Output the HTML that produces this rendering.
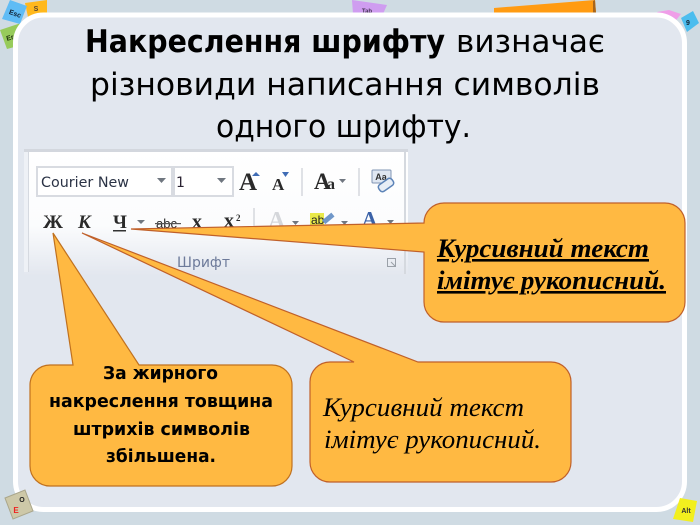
<!DOCTYPE html>
<html><head><meta charset="utf-8"><style>
html,body{margin:0;padding:0}
body{width:700px;height:525px;position:relative;overflow:hidden;background:#cfdbe3}
svg{position:absolute;left:0;top:0}
</style></head><body>
<svg width="700" height="525" viewBox="0 0 700 525" xmlns="http://www.w3.org/2000/svg">
<defs><linearGradient id="rb" x1="0" y1="0" x2="0" y2="1"><stop offset="0" stop-color="#fff"/><stop offset=".6" stop-color="#fbfcfd"/><stop offset="1" stop-color="#e3e7ef"/></linearGradient>
<filter id="b" x="0" y="0" width="100%" height="100%"><feGaussianBlur stdDeviation="0.35"/></filter></defs>
<g font-family="Liberation Sans, sans-serif" font-weight="bold" text-anchor="middle">
<path d="M25 3 L47 0 L47 13 L28 17Z" fill="#ffb81c"/>
<text x="36" y="11" font-size="7" fill="#543">S</text>
<path d="M0 30 L21 23 L30 30 L18 46 L7 49Z" fill="#97cb5b"/>
<text x="10" y="40" font-size="7" fill="#231" transform="rotate(-15 10 38)">Er</text>
<path d="M10 0 L27 6 L20 24 L2 19Z" fill="#5fbcf5"/>
<text x="15" y="16" font-size="7" fill="#123" transform="rotate(20 15 14)">Esc</text>
<path d="M352 0 L387 5 L383 14 L353 14Z" fill="#cf9df0"/>
<text x="367" y="13" font-size="6" fill="#435">Tab</text>
<path d="M494 8 L595 0 L596 13 L494 13Z" fill="#ff9b12"/>
<path d="M593 1 L595 0 L596 13 L593 13Z" fill="#a8651a"/>
<path d="M657 12 L669 10 L681 14 L673 24Z" fill="#ef9ee8"/>
<path d="M681 18 L693 11 L699 23 L687 32Z" fill="#4cbdee"/>
<text x="688" y="25" font-size="7" fill="#123">9</text>
</g>
<rect x="15.500" y="15" width="669" height="494.500" rx="28" fill="#e2e7ef" stroke="#fff" stroke-width="5"/>
<g font-family="Liberation Sans, sans-serif" font-weight="bold" text-anchor="middle">
<path d="M5 498 L25 490 L33 511 L13 519Z" fill="#cdc8a8" stroke="#aaa68b" stroke-width="1"/>
<text x="22" y="502" font-size="7" fill="#222">O</text>
<text x="16" y="513" font-size="8" fill="#e22">E</text>
<path d="M680 498 L697 501 L693 522 L673 519Z" fill="#f2ef1e"/>
<text x="686" y="513" font-size="7" fill="#333">Alt</text>
</g>
<g filter="url(#b)">
<rect x="24" y="150" width="384" height="125" fill="url(#rb)"/>
<rect x="24" y="149" width="384" height="3" fill="#d3d7de"/>
<rect x="24" y="152" width="4" height="120" fill="#eef1f6"/>
<rect x="28" y="152" width="1" height="120" fill="#d5d9e0"/>
<rect x="404" y="152" width="2" height="122" fill="#d5d9df"/>
<rect x="37" y="167" width="135" height="29" fill="#fff" stroke="#d8dbe1" stroke-width="2"/>
<rect x="174" y="167" width="59" height="29" fill="#fff" stroke="#d8dbe1" stroke-width="2"/>
<path d="M157 178h9l-4.500 5zM217 178h9l-4.500 5zM339 179h7l-3.500 4zM137 220h8l-4 4zM292 221h7l-3.500 4zM341 221h7l-3.500 4zM387 220h7l-3.500 4z" fill="#707780"/>
<text x="41" y="187" font-family="DejaVu Sans, sans-serif" font-size="14" fill="#2a3344" textLength="88" lengthAdjust="spacingAndGlyphs">Courier New</text>
<text x="176" y="187" font-family="DejaVu Sans, sans-serif" font-size="14" fill="#2a2233">1</text>
<text x="177" y="267" font-family="DejaVu Sans, sans-serif" font-size="14" fill="#6d7a9a" textLength="53" lengthAdjust="spacingAndGlyphs">Шрифт</text>
<g font-family="Liberation Serif, serif" font-weight="bold" fill="#2b2b2b">
<text x="239" y="190" font-size="25">A</text>
<text x="272" y="190" font-size="17">A</text>
<text x="314" y="189" font-size="23">A</text><text x="327" y="189" font-size="16">a</text>
<text x="43" y="228" font-size="19" textLength="20" lengthAdjust="spacingAndGlyphs">Ж</text>
<text x="78" y="228" font-size="19" font-style="italic">К</text>
<text x="113" y="228" font-size="19">Ч</text>
<text x="156" y="228" font-size="13" font-family="Liberation Sans, sans-serif" font-weight="normal">abc</text>
<text x="192" y="228" font-size="20">x</text>
<text x="224" y="227" font-size="20">x</text><text x="236" y="221" font-size="9">2</text>
<text x="268" y="228" font-size="24" fill="#d5d7db">A</text>
<text x="362" y="226" font-size="21" fill="#3b62a8">A</text>
</g>
<rect x="113" y="230" width="13" height="1.500" fill="#333"/>
<rect x="155" y="223" width="26" height="1.200" fill="#555"/>
<path d="M302 168v28M359 168v28M254 208v20" stroke="#d5d8dd" stroke-width="1.500"/>
<path d="M252 176l4-4 4 4zM282 172h7l-3.500 5z" fill="#3f6cb5"/>
<rect x="372" y="170" width="19" height="13" rx="1" fill="#dfe7f2" stroke="#8095b4"/>
<text x="381" y="180" font-family="Liberation Sans, sans-serif" font-size="9" font-weight="bold" text-anchor="middle" fill="#333">Aa</text>
<rect x="378" y="181" width="16" height="8" rx="3" fill="#e8eef6" stroke="#5d84b8" stroke-width="1.500" transform="rotate(-35 386 185)"/>
<rect x="310" y="213" width="14" height="14" fill="#e9e94a"/>
<text x="311" y="224" font-family="Liberation Sans, sans-serif" font-size="12" fill="#222">ab</text>
<rect x="322" y="216" width="12" height="5" fill="#6f97c9" transform="rotate(-40 328 218)"/>
<path d="M387.500 258.500h8v8h-8zM391 262l4 4" fill="none" stroke="#9aa0a8"/>
</g>
<path d="M73 365 L53 233 L139 365 H272 A20 20 0 0 1 292 385 V466 A20 20 0 0 1 272 486 H50 A20 20 0 0 1 30 466 V385 A20 20 0 0 1 50 365Z" fill="#ffb942" stroke="#c0711f" stroke-width="1.200"/>
<path d="M354 362 L82 233 L418 362 H551 A20 20 0 0 1 571 382 V462 A20 20 0 0 1 551 482 H330 A20 20 0 0 1 310 462 V382 A20 20 0 0 1 330 362Z" fill="#ffb942" stroke="#c0602a" stroke-width="1.200"/>
<path d="M424 223 A20 20 0 0 1 444 203 H665 A20 20 0 0 1 685 223 V302 A20 20 0 0 1 665 322 H444 A20 20 0 0 1 424 302 V252 L131 229Z" fill="#ffb942" stroke="#c0602a" stroke-width="1.200"/>
<g font-family="DejaVu Sans, sans-serif" fill="#000" font-size="31">
<text x="85" y="52" font-weight="bold" textLength="360" lengthAdjust="spacingAndGlyphs">Накреслення шрифту</text>
<text x="456" y="52" textLength="149" lengthAdjust="spacingAndGlyphs">визначає</text>
<text x="90" y="95" textLength="510" lengthAdjust="spacingAndGlyphs">різновиди написання символів</text>
<text x="216" y="137" textLength="255" lengthAdjust="spacingAndGlyphs">одного шрифту.</text>
</g>
<g font-family="DejaVu Sans, sans-serif" font-weight="bold" fill="#000" font-size="18">
<text x="103" y="379" textLength="115" lengthAdjust="spacingAndGlyphs">За жирного</text>
<text x="49" y="407" textLength="224" lengthAdjust="spacingAndGlyphs">накреслення товщина</text>
<text x="73" y="435" textLength="177" lengthAdjust="spacingAndGlyphs">штрихів символів</text>
<text x="106" y="462" textLength="110" lengthAdjust="spacingAndGlyphs">збільшена.</text>
</g>
<g font-family="Liberation Serif, serif" font-style="italic" fill="#000" font-size="26">
<text x="323" y="416" textLength="201" lengthAdjust="spacingAndGlyphs">Курсивний текст</text>
<text x="324" y="448" textLength="217" lengthAdjust="spacingAndGlyphs">імітує рукописний.</text>
</g>
<g font-family="Liberation Serif, serif" font-style="italic" font-weight="bold" fill="#000" font-size="26">
<text x="437" y="257" text-decoration="underline" textLength="212" lengthAdjust="spacingAndGlyphs">Курсивний текст</text>
<text x="437" y="289" text-decoration="underline" textLength="229" lengthAdjust="spacingAndGlyphs">імітує рукописний.</text>
</g>
</svg>
</body></html>
